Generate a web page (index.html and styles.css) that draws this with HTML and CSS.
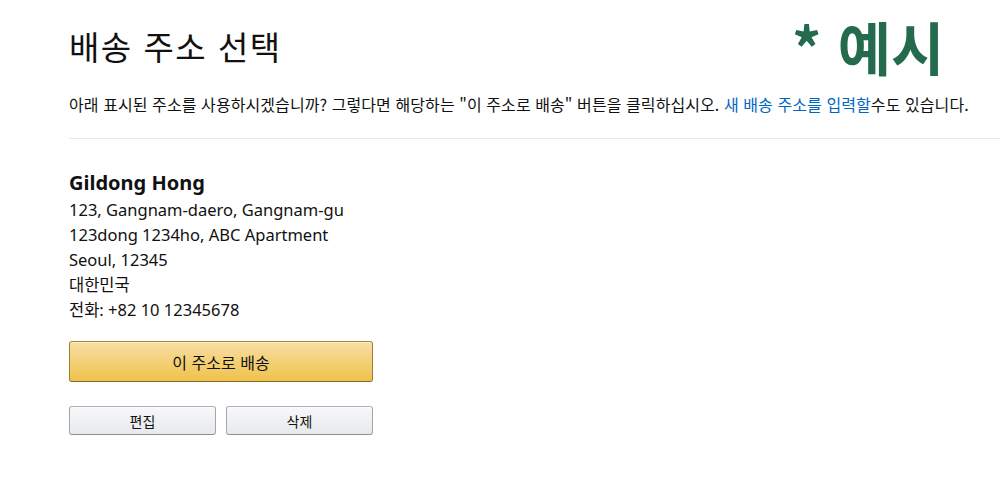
FILE: index.html
```html
<!DOCTYPE html>
<html lang="ko">
<head>
<meta charset="utf-8">
<link rel="stylesheet" href="styles.css">
</head>
<body>
<div class="page">
  <div class="badge">* 예시</div>
  <h1 class="title">배송 주소 선택</h1>
  <p class="desc">아래 표시된 주소를 사용하시겠습니까? 그렇다면 해당하는 "이 주소로 배송" 버튼을 클릭하십시오. <a class="link" href="#">새 배송 주소를 입력할</a>수도 있습니다.</p>
  <hr class="divider">
  <div class="address">
    <div class="name">Gildong Hong</div>
    <div class="line">123, Gangnam-daero, Gangnam-gu</div>
    <div class="line">123dong 1234ho, ABC Apartment</div>
    <div class="line">Seoul, 12345</div>
    <div class="line">대한민국</div>
    <div class="line">전화: +82 10 12345678</div>
  </div>
  <div class="actions">
    <button class="btn-primary">이 주소로 배송</button>
    <div class="secondary">
      <button class="btn-secondary">편집</button>
      <button class="btn-secondary">삭제</button>
    </div>
  </div>
</div>
</body>
</html>
```

FILE: styles.css
```css
html, body {
  margin: 0;
  padding: 0;
  background: #fff;
}
body {
  font-family: "Noto Sans", "Noto Sans CJK KR", sans-serif;
  color: #111;
}
.page {
  position: relative;
  padding: 22px 0 0 69px;
}
.badge {
  position: absolute;
  top: 6px;
  left: 792px;
  font-family: "Noto Sans CJK KR", sans-serif;
  font-weight: 700;
  font-size: 58px;
  line-height: 80px;
  color: #246a4c;
}
.title {
  margin: 0;
  font-family: "Noto Sans CJK KR", sans-serif;
  font-weight: 400;
  font-size: 33px;
  letter-spacing: 1.5px;
  line-height: 48px;
  color: #111;
}
.desc {
  margin: 23px 0 0;
  font-family: "Noto Sans CJK KR", sans-serif;
  font-size: 16px;
  letter-spacing: 0.08px;
  line-height: 22px;
  color: #111;
}
.link {
  color: #0066c0;
  text-decoration: none;
}
.divider {
  margin: 23px 0 0;
  border: 0;
  border-top: 1px solid #e7e7e7;
  height: 0;
}
.address {
  margin-top: 30px;
  font-size: 16.5px;
}
.name {
  font-weight: 700;
  font-size: 20px;
  line-height: 28px;
}
.line {
  line-height: 25px;
}
.actions {
  margin-top: 19px;
  width: 304px;
  display: flex;
  flex-direction: column;
  gap: 24px;
}
.btn-primary {
  height: 41px;
  border-radius: 3px;
  border: 1px solid;
  border-color: #a88734 #9c7e31 #846a29;
  background: linear-gradient(to bottom, #f7dfa5, #f0c14b);
  font-family: "Noto Sans CJK KR", sans-serif;
  font-size: 16px;
  color: #111;
  box-shadow: inset 0 1px 0 rgba(255,255,255,.4);
}
.secondary {
  display: flex;
  gap: 10px;
}
.btn-secondary {
  flex: 1;
  height: 29px;
  border-radius: 3px;
  border: 1px solid;
  border-color: #adb1b8 #a2a6ac #8d9096;
  background: linear-gradient(to bottom, #f7f8fa, #e7e9ec);
  font-family: "Noto Sans CJK KR", sans-serif;
  font-size: 14px;
  color: #111;
  box-shadow: inset 0 1px 0 rgba(255,255,255,.6);
}
```
